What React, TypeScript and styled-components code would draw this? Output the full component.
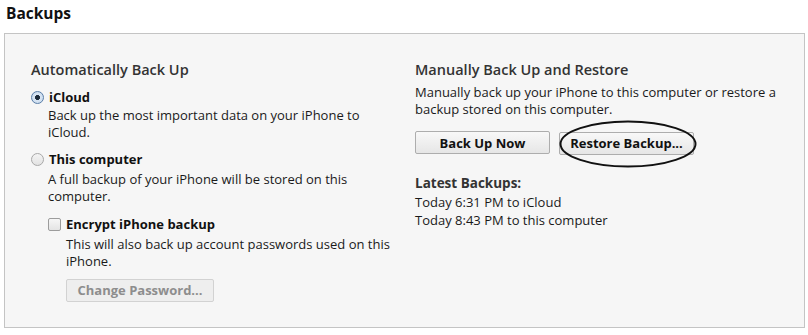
import styled, { createGlobalStyle } from "styled-components";

const GlobalStyle = createGlobalStyle`
  html, body {
    margin: 0;
    padding: 0;
    background: #ffffff;
  }
  body {
    font-family: "Open Sans", "Noto Sans", sans-serif;
    color: #1a1a1a;
  }
`;

const Page = styled.div`
  width: 808px;
  height: 335px;
  padding: 3px 3px 0 4px;
  box-sizing: border-box;
`;

const Title = styled.h1`
  margin: 0 0 0 2px;
  font-size: 15.5px;
  font-weight: 700;
  line-height: 20px;
  height: 30px;
  color: #111;
`;

const Panel = styled.div`
  display: flex;
  height: 295px;
  box-sizing: border-box;
  background: #f6f6f6;
  border: 1px solid #c4c4c4;
  padding: 26px 0 0 26px;
`;

const Column = styled.div<{ $width: number; $gap?: number }>`
  width: ${(p) => p.$width}px;
  margin-right: ${(p) => p.$gap ?? 0}px;
  display: flex;
  flex-direction: column;
`;

const Heading = styled.h2`
  margin: 0;
  font-size: 14.5px;
  font-weight: 600;
  line-height: 20px;
  color: #333;
`;

const Option = styled.label<{ $indent?: number; $top: number }>`
  display: flex;
  align-items: center;
  gap: 5px;
  margin: ${(p) => p.$top}px 0 0 ${(p) => p.$indent ?? 0}px;
  font-size: 13px;
  font-weight: 700;
  line-height: 17px;
  color: #111;
`;

const Radio = styled.span<{ $checked?: boolean }>`
  width: 11px;
  height: 11px;
  border-radius: 50%;
  border: 1px solid ${(p) => (p.$checked ? "#5a7ea8" : "#a8a8a8")};
  background: ${(p) =>
    p.$checked
      ? "radial-gradient(circle, #1c2a3a 0 2.2px, #d9e6f4 2.8px, #c3d5ea 100%)"
      : "linear-gradient(#f4f4f4, #e2e2e2)"};
  flex: none;
`;

const Checkbox = styled.span`
  width: 11px;
  height: 11px;
  border-radius: 2px;
  border: 1px solid #9c9c9c;
  background: linear-gradient(#f6f6f6, #e4e4e4);
  flex: none;
`;

const Desc = styled.p<{ $indent: number; $top: number }>`
  margin: ${(p) => p.$top}px 0 0 ${(p) => p.$indent}px;
  font-size: 13px;
  line-height: 17px;
  color: #1a1a1a;
`;

const Button = styled.button<{ $width: number; $disabled?: boolean }>`
  width: ${(p) => p.$width}px;
  height: 23px;
  box-sizing: border-box;
  border: 1px solid ${(p) => (p.$disabled ? "#d2d2d2" : "#adadad")};
  border-radius: 2px;
  background: ${(p) =>
    p.$disabled ? "#eeeeee" : "linear-gradient(#f8f8f8, #e6e6e6)"};
  font-family: inherit;
  font-size: 13px;
  font-weight: 700;
  color: ${(p) => (p.$disabled ? "#8d8d8d" : "#111")};
  padding: 0;
  line-height: 20px;
`;

const ButtonSlot = styled.div<{ $indent: number; $top: number }>`
  margin: ${(p) => p.$top}px 0 0 ${(p) => p.$indent}px;
`;

const ButtonRow = styled.div`
  display: flex;
  gap: 9px;
  margin-top: 13px;
`;

const Circled = styled.div`
  position: relative;
`;

const Ellipse = styled.svg`
  position: absolute;
  left: 0px;
  top: -11px;
  pointer-events: none;
`;

const SubHeading = styled.h3`
  margin: 19px 0 1px;
  font-size: 13.5px;
  font-weight: 700;
  line-height: 18px;
  color: #333;
`;

const Line = styled.div`
  font-size: 13px;
  line-height: 18px;
  color: #1a1a1a;
`;

export default function App() {
  return (
    <>
      <GlobalStyle />
      <Page>
        <Title>Backups</Title>
        <Panel>
          <Column $width={362} $gap={22}>
            <Heading>Automatically Back Up</Heading>
            <Option $top={9}>
              <Radio $checked />
              iCloud
            </Option>
            <Desc $indent={17} $top={1}>
              Back up the most important data on your iPhone to iCloud.
            </Desc>
            <Option $top={10}>
              <Radio />
              This computer
            </Option>
            <Desc $indent={17} $top={3}>
              A full backup of your iPhone will be stored on this computer.
            </Desc>
            <Option $indent={17} $top={11}>
              <Checkbox />
              Encrypt iPhone backup
            </Option>
            <Desc $indent={35} $top={3}>
              This will also back up account passwords used on this iPhone.
            </Desc>
            <ButtonSlot $indent={35} $top={8}>
              <Button $width={148} $disabled>
                Change Password...
              </Button>
            </ButtonSlot>
          </Column>
          <Column $width={370}>
            <Heading>Manually Back Up and Restore</Heading>
            <Desc $indent={0} $top={4}>
              Manually back up your iPhone to this computer or restore a
              backup stored on this computer.
            </Desc>
            <ButtonRow>
              <Button $width={135}>Back Up Now</Button>
              <Circled>
                <Button $width={135}>Restore Backup...</Button>
                <Ellipse width="140" height="48" viewBox="0 0 140 48">
                  <ellipse
                    cx="69"
                    cy="24"
                    rx="67.5"
                    ry="22.5"
                    fill="none"
                    stroke="#111"
                    strokeWidth="2"
                  />
                </Ellipse>
              </Circled>
            </ButtonRow>
            <SubHeading>Latest Backups:</SubHeading>
            <Line>Today 6:31 PM to iCloud</Line>
            <Line>Today 8:43 PM to this computer</Line>
          </Column>
        </Panel>
      </Page>
    </>
  );
}
